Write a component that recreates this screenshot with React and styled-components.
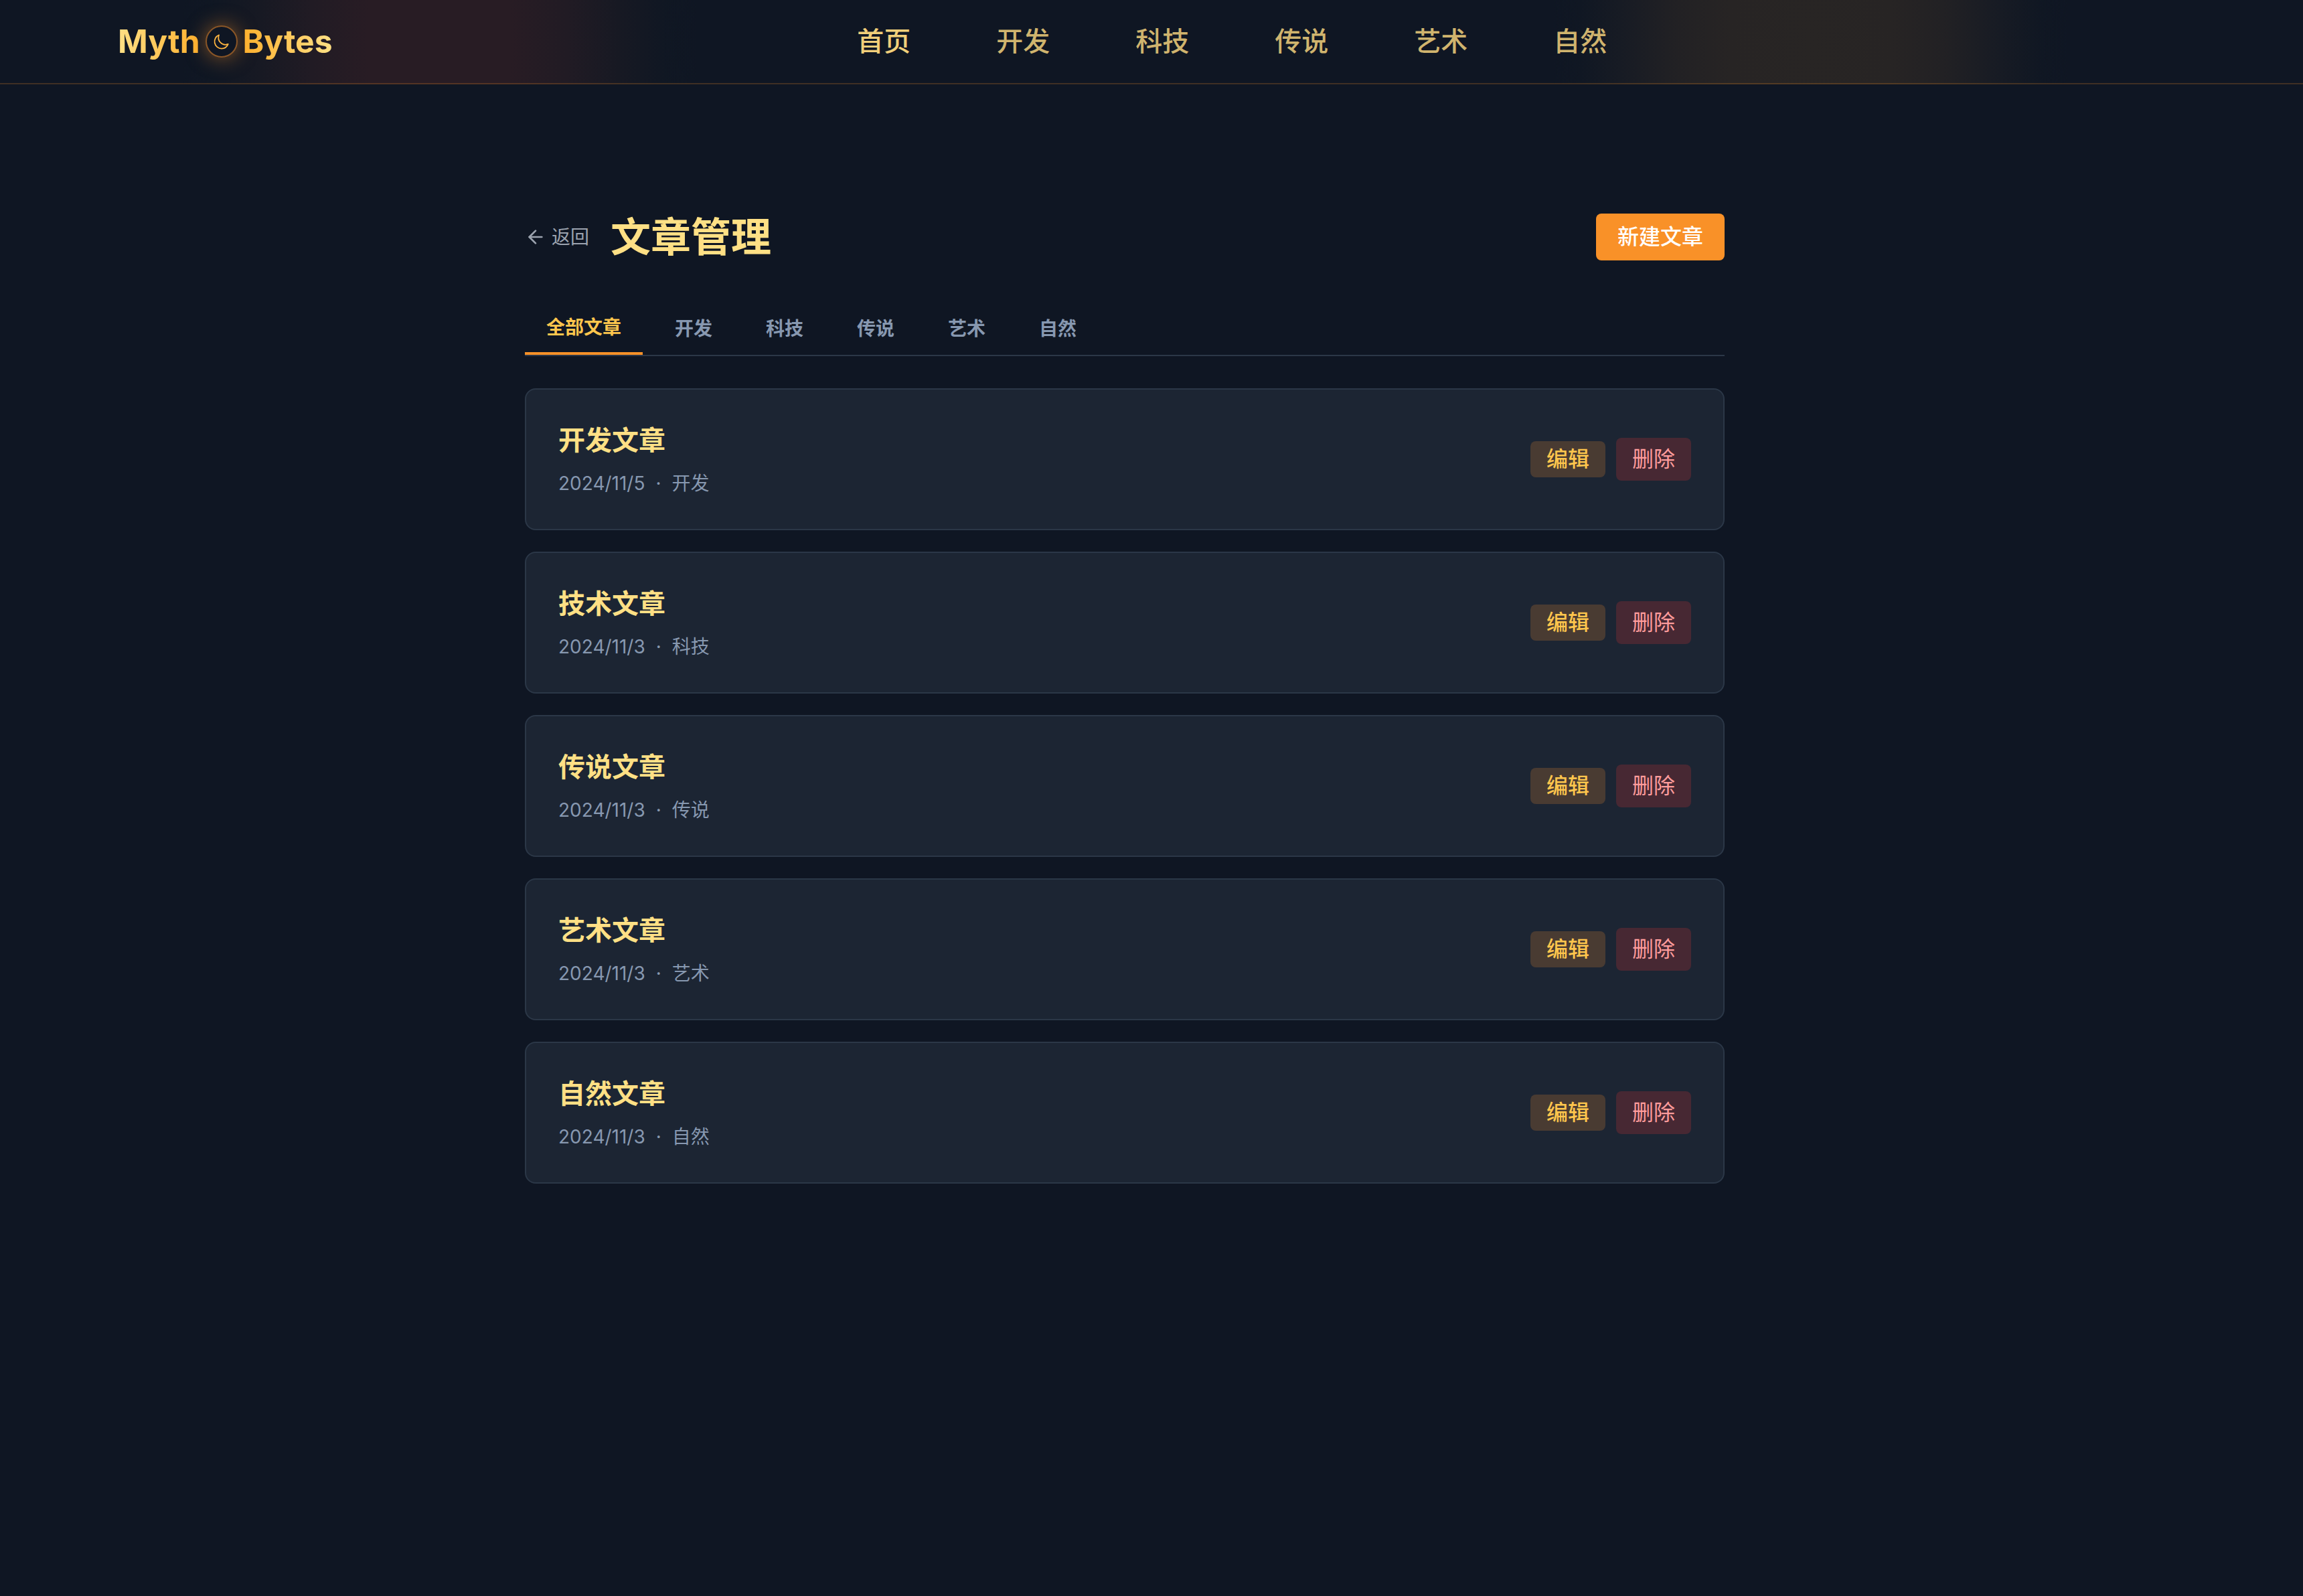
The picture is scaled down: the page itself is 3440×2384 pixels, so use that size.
import React from "react";
import styled, { createGlobalStyle } from "styled-components";
import { ArrowLeft } from "lucide-react";

const GlobalStyle = createGlobalStyle`
    * {
        box-sizing: border-box;
    }
    body {
        margin: 0;
        min-height: 100vh;
        background-color: #0f1623;
        color: #ffe085;
        font-family: Inter, "Noto Sans CJK SC", sans-serif;
        font-size: 32px;
        line-height: 48px;
    }
    button {
        font-family: inherit;
        border: none;
        cursor: pointer;
    }
    a {
        text-decoration: none;
    }
`;

const StyleHeader = styled.header`
    background-color: #0f1623;
    background-image:
        radial-gradient(384px 900px at 656px 62px, #281c24 0%, #281c24 28%, #211b24 50%, #171923 70%, #101723 88%, #0f162300 100%),
        radial-gradient(384px 900px at 2704px 62px, #282524 0%, #272424 32%, #222124 52%, #171b24 74%, #101723 90%, #0f162300 100%);
    border-bottom: 2px solid #ff952833;
`;

const HeaderInner = styled.div`
    display: flex;
    align-items: center;
    justify-content: space-between;
    height: 124px;
    padding: 0 256px 0 176px;
`;

const Logo = styled.a`
    display: flex;
    align-items: center;
    gap: 8px;
    font-size: 48px;
    font-weight: 700;
    line-height: 64px;
`;

const LogoText = styled.span`
    background: linear-gradient(to ${(props) => props.$to}, #ffe085, #ffb02e);
    background-clip: text;
    color: transparent;
`;

const LogoBadge = styled.span`
    display: flex;
    align-items: center;
    justify-content: center;
    width: 48px;
    height: 48px;
    border: 2px solid #8a5627;
    border-radius: 50%;
    background-color: #0f1623;
    box-shadow: 0 0 30px #f9912880;
`;

const Nav = styled.nav`
    display: flex;
    gap: 128px;
`;

const NavLink = styled.a`
    color: ${(props) => (props.$active ? "#f1cf7a" : "#d0b46e")};
    font-size: 40px;
    font-weight: 500;
    line-height: 56px;
`;

const HeaderEnd = styled.div`
    width: 0;
`;

const Main = styled.main`
    padding: 192px 80px 64px 0;
`;

const Container = styled.div`
    max-width: 1792px;
    margin: 0 auto;
`;

const TitleBar = styled.div`
    display: flex;
    align-items: center;
    justify-content: space-between;
    margin-bottom: 62px;
`;

const TitleGroup = styled.div`
    display: flex;
    align-items: center;
    gap: 32px;
`;

const BackLink = styled.a`
    display: flex;
    align-items: center;
    gap: 8px;
    color: #9ca3af;
    font-size: 28px;
    line-height: 40px;
`;

const Title = styled.h1`
    margin: 0;
    font-size: 60px;
    font-weight: 700;
    line-height: 72px;
`;

const NewButton = styled.button`
    padding: 16px 32px;
    border-radius: 8px;
    background-color: #f99128;
    color: #ffffff;
    font-size: 32px;
    font-weight: 500;
    line-height: 38px;
`;

const Tabs = styled.div`
    display: flex;
    gap: 16px;
    margin-bottom: 48px;
    border-bottom: 2px solid #2c3747;
`;

const Tab = styled.button`
    padding: 20px 32px;
    background: none;
    color: ${(props) => (props.$active ? "#ffc64d" : "#8798b0")};
    border-bottom: ${(props) => (props.$active ? "4px solid #f99128" : "none")};
    font-size: 28px;
    font-weight: 600;
    line-height: 34px;
`;

const List = styled.div`
    display: flex;
    flex-direction: column;
    gap: 32px;
`;

const Card = styled.article`
    display: flex;
    align-items: center;
    justify-content: space-between;
    padding: 48px;
    border: 2px solid #2b3747;
    border-radius: 16px;
    background-color: #1c2533;
`;

const CardTitle = styled.h2`
    margin: 0 0 16px;
    font-size: 40px;
    font-weight: 700;
    line-height: 56px;
`;

const Meta = styled.div`
    display: flex;
    gap: 16px;
    color: #8798b0;
    font-size: 28px;
    line-height: 40px;
`;

const Actions = styled.div`
    display: flex;
    align-items: center;
    gap: 16px;
`;

const EditLink = styled.a`
    padding: 8px 24px;
    border-radius: 8px;
    background-color: #493b32;
    color: #ffc64d;
    font-weight: 500;
    line-height: 38px;
`;

const DeleteButton = styled.button`
    padding: 8px 24px;
    border-radius: 8px;
    background-color: #472833;
    color: #ff9c9c;
    font-size: 32px;
    line-height: 48px;
`;

const navItems = ["首页", "开发", "科技", "传说", "艺术", "自然"];
const tabs = ["全部文章", "开发", "科技", "传说", "艺术", "自然"];

const articles = [
    { title: "开发文章", date: "2024/11/5", category: "开发" },
    { title: "技术文章", date: "2024/11/3", category: "科技" },
    { title: "传说文章", date: "2024/11/3", category: "传说" },
    { title: "艺术文章", date: "2024/11/3", category: "艺术" },
    { title: "自然文章", date: "2024/11/3", category: "自然" },
];

const MoonIcon = () => (
    <svg width="28" height="28" viewBox="0 0 24 24" fill="none" stroke="#ffb540" strokeWidth="1.5" strokeLinecap="round" strokeLinejoin="round" aria-hidden="true">
        <path d="M20.354 15.354A9 9 0 0 1 8.646 3.646 9.003 9.003 0 0 0 12 21a9.003 9.003 0 0 0 8.354-5.646z" />
    </svg>
);

const Header = () => {
    return (
        <StyleHeader>
            <HeaderInner>
                <Logo href="#">
                    <LogoText $to="right">Myth</LogoText>
                    <LogoBadge>
                        <MoonIcon />
                    </LogoBadge>
                    <LogoText $to="left">Bytes</LogoText>
                </Logo>
                <Nav>
                    {navItems.map((item, index) => (
                        <NavLink key={item} href="#" $active={index === 0}>{item}</NavLink>
                    ))}
                </Nav>
                <HeaderEnd />
            </HeaderInner>
        </StyleHeader>
    )
};

const ArticleCard = ({ title, date, category }) => {
    return (
        <Card>
            <div>
                <CardTitle>{title}</CardTitle>
                <Meta>
                    <span>{date}</span>
                    <span>·</span>
                    <span>{category}</span>
                </Meta>
            </div>
            <Actions>
                <EditLink href="#">编辑</EditLink>
                <DeleteButton type="button">删除</DeleteButton>
            </Actions>
        </Card>
    )
};

const App = () => {
    return (
        <>
            <GlobalStyle />
            <Header />
            <Main>
                <Container>
                    <TitleBar>
                        <TitleGroup>
                            <BackLink href="#">
                                <ArrowLeft size={32} />
                                返回
                            </BackLink>
                            <Title>文章管理</Title>
                        </TitleGroup>
                        <NewButton type="button">新建文章</NewButton>
                    </TitleBar>
                    <Tabs>
                        {tabs.map((tab, index) => (
                            <Tab key={tab} type="button" $active={index === 0}>{tab}</Tab>
                        ))}
                    </Tabs>
                    <List>
                        {articles.map((article) => (
                            <ArticleCard key={article.title} {...article} />
                        ))}
                    </List>
                </Container>
            </Main>
        </>
    )
};

export default App;
